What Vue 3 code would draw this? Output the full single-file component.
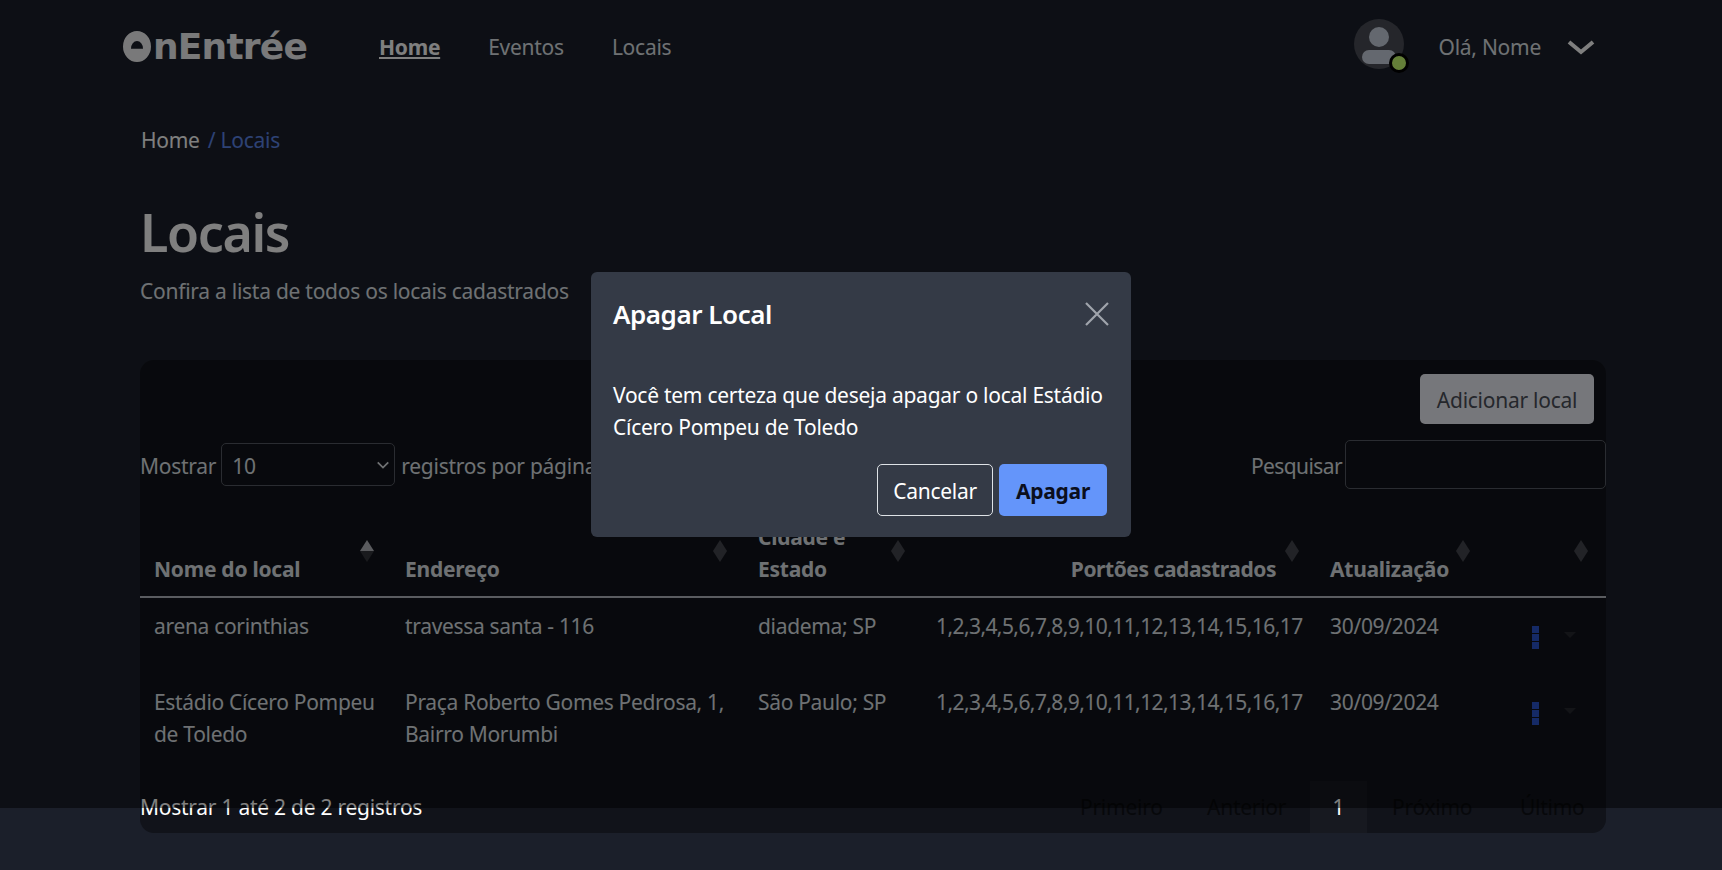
<template>
  <div class="page">
    <header class="navbar">
      <div class="logo" aria-label="OnEntrée">
        <svg class="logo-o" viewBox="0 0 30 30" width="30" height="33" preserveAspectRatio="none">
          <path fill-rule="evenodd" d="M15 1a14 14 0 1 0 0 28 14 14 0 0 0 0-28zM9 17a6 7 0 0 1 12 0z" fill="#fff" />
        </svg>
        <span>nEntrée</span>
      </div>
      <nav class="nav-links">
        <a class="active">Home</a>
        <a>Eventos</a>
        <a>Locais</a>
      </nav>
      <div class="user">
        <div class="avatar">
          <svg viewBox="0 0 50 50" width="50" height="50">
            <circle cx="25" cy="25" r="25" fill="#4a4d57" />
            <circle cx="25" cy="18" r="10" fill="#c9d1de" />
            <rect x="8" y="31" width="34" height="14" rx="7" fill="#c9d1de" />
          </svg>
          <span class="status"></span>
        </div>
        <span class="hello">Olá, Nome</span>
        <svg class="chevron" viewBox="0 0 28 16" width="28" height="16">
          <path d="M2 3l12 10L26 3" fill="none" stroke="#fff" stroke-width="4" />
        </svg>
      </div>
    </header>

    <main class="content">
      <div class="breadcrumb"><span>Home</span><a>/ Locais</a></div>
      <h1>Locais</h1>
      <p class="subtitle">Confira a lista de todos os locais cadastrados</p>

      <section class="card">
        <div class="card-top">
          <button class="btn-add">Adicionar local</button>
        </div>
        <div class="controls">
          <div class="per-page">
            <span>Mostrar</span>
            <div class="select">
              <span>10</span>
              <svg viewBox="0 0 16 16" width="14" height="14">
                <path d="M2 5l6 6 6-6" fill="none" stroke="#dee2e6" stroke-width="2" />
              </svg>
            </div>
            <span>registros por página</span>
          </div>
          <div class="search">
            <span>Pesquisar</span>
            <div class="search-input"></div>
          </div>
        </div>

        <table>
          <colgroup>
            <col v-for="w in colWidths" :key="w" :style="{ width: w + 'px' }" />
          </colgroup>
          <thead>
            <tr>
              <th v-for="(h, i) in headers" :key="i" :class="{ right: h.right }">
                {{ h.label }}
                <span class="sort" :class="{ asc: i === 0 }" :style="{ right: h.sort + 'px' }"></span>
              </th>
            </tr>
          </thead>
          <tbody>
            <tr v-for="row in rows" :key="row.name">
              <td>{{ row.name }}</td>
              <td>{{ row.address }}</td>
              <td>{{ row.city }}</td>
              <td class="gates">{{ row.gates }}</td>
              <td>{{ row.updated }}</td>
              <td>
                <div class="actions">
                  <span class="dots"><i></i><i></i><i></i></span>
                  <span class="caret"></span>
                </div>
              </td>
            </tr>
          </tbody>
        </table>

        <div class="card-footer">
          <span class="info">Mostrar 1 até 2 de 2 registros</span>
          <div class="pagination">
            <a class="p-first">Primeiro</a>
            <a class="p-prev">Anterior</a>
            <a class="p-current">1</a>
            <a class="p-next">Próximo</a>
            <a class="p-last">Último</a>
          </div>
        </div>
      </section>
    </main>

    <div class="backdrop"></div>

    <div class="modal">
      <div class="modal-head">
        <h2>Apagar Local</h2>
        <svg viewBox="0 0 24 24" width="24" height="24">
          <path d="M1 1l22 22M23 1L1 23" stroke="#a0a4ac" stroke-width="2.2" fill="none" />
        </svg>
      </div>
      <p>Você tem certeza que deseja apagar o local Estádio Cícero Pompeu de Toledo</p>
      <div class="modal-actions">
        <button class="btn-cancel">Cancelar</button>
        <button class="btn-delete">Apagar</button>
      </div>
    </div>
  </div>
</template>

<script setup>
const colWidths = [251, 353, 178, 394, 150, 140]

const headers = [
  { label: 'Nome do local', sort: 17 },
  { label: 'Endereço', sort: 17 },
  { label: 'Cidade e Estado', sort: 17 },
  { label: 'Portões cadastrados', right: true, sort: 17 },
  { label: 'Atualização', sort: -4 },
  { label: '', sort: 18 },
]

const gates = '1,2,3,4,5,6,7,8,9,10,11,12,13,14,15,16,17'

const rows = [
  { name: 'arena corinthias', address: 'travessa santa - 116', city: 'diadema; SP', gates, updated: '30/09/2024' },
  {
    name: 'Estádio Cícero Pompeu de Toledo',
    address: 'Praça Roberto Gomes Pedrosa, 1, Bairro Morumbi',
    city: 'São Paulo; SP',
    gates,
    updated: '30/09/2024',
  },
]
</script>

<style>
html,
body {
  margin: 0;
  background: #1b1f2a;
  overflow: hidden;
}
</style>

<style scoped>
* {
  box-sizing: border-box;
}
.page {
  position: relative;
  height: 870px;
  overflow: hidden;
  font-family: "Noto Sans", "Open Sans", sans-serif;
  font-size: 21px;
  line-height: 32px;
  letter-spacing: -0.26px;
  color: #dee2e6;
  background: #1b1f2a;
}

.navbar {
  display: flex;
  align-items: center;
  height: 93px;
  padding-left: 122px;
}
.logo {
  display: flex;
  align-items: center;
  gap: 1px;
  width: 257px;
  color: #fff;
  font-family: "DejaVu Sans", sans-serif;
  font-weight: 700;
  font-size: 36px;
  letter-spacing: -0.8px;
  opacity: 0.95;
}
.nav-links {
  display: flex;
  gap: 48px;
}
.nav-links .active {
  font-weight: 700;
  color: #fff;
  text-decoration: underline;
}
.user {
  display: flex;
  align-items: center;
  margin-left: auto;
  padding-right: 127px;
}
.avatar {
  position: relative;
  width: 50px;
  height: 50px;
  margin: -5px 35px 0 0;
}
.status {
  position: absolute;
  right: -5px;
  bottom: -4px;
  width: 20px;
  height: 20px;
  border-radius: 50%;
  background: #c8ff70;
  border: 3px solid #000;
}
.hello {
  margin-right: 26px;
}

.content {
  margin: 0 116px 0 140px;
}
.breadcrumb {
  display: flex;
  gap: 8px;
  margin-top: 31px;
  padding-left: 1px;
}
.breadcrumb span {
  color: #fff;
}
.breadcrumb a {
  color: #5c85e8;
}
h1 {
  margin: 41px 0 0;
  font-size: 52px;
  line-height: 70px;
  font-weight: 600;
  letter-spacing: -1.4px;
  color: #fff;
}
.subtitle {
  margin: 8px 0 0;
}

.card {
  display: flex;
  flex-direction: column;
  margin-top: 53px;
  height: 473px;
  border-radius: 14px;
  background: #11131a;
}
.card-top {
  display: flex;
  justify-content: flex-end;
  padding: 14px 12px 0;
}
.btn-add {
  width: 174px;
  height: 50px;
  padding-top: 3px;
  border: none;
  border-radius: 5px;
  background: #eceef6;
  color: #4a4e58;
  font: inherit;
  letter-spacing: inherit;
}
.controls {
  display: flex;
  justify-content: space-between;
  align-items: center;
  margin-top: 16px;
}
.per-page,
.search {
  display: flex;
  align-items: center;
}
.per-page span,
.search span {
  padding-top: 2px;
}
.search span {
  letter-spacing: -0.6px;
}
.select {
  display: flex;
  align-items: center;
  justify-content: space-between;
  width: 174px;
  height: 43px;
  margin: 0 6px 0 5px;
  padding: 0 4px 0 10px;
  border: 1.5px solid #555962;
  border-radius: 5px;
}
.search-input {
  width: 261px;
  height: 49px;
  margin-left: 3px;
  border: 1.5px solid #555962;
  border-radius: 5px;
}

table {
  width: 1466px;
  margin-top: 9px;
  border-collapse: collapse;
  table-layout: fixed;
}
th {
  position: relative;
  height: 99px;
  padding: 0 13px 11px 14px;
  vertical-align: bottom;
  text-align: left;
  font-weight: 700;
  border-bottom: 2px solid #b4b8c0;
}
th.right {
  padding-right: 40px;
  letter-spacing: -0.45px;
  text-align: right;
}
.sort {
  position: absolute;
  bottom: 34px;
  width: 14px;
  height: 22px;
  background: #45474f;
  clip-path: polygon(50% 0, 100% 50%, 50% 100%, 0 50%);
}
.sort.asc {
  background: linear-gradient(#b4b6bc 50%, #34363d 50%);
}
td {
  padding: 12px 13px 20px 14px;
  vertical-align: top;
  letter-spacing: -0.32px;
}
td.gates {
  letter-spacing: -0.58px;
}
tbody tr:first-child td {
  height: 77px;
}
.actions {
  position: relative;
  display: flex;
  align-items: center;
  gap: 25px;
  padding: 16px 0 0 52px;
}
.dots {
  display: flex;
  flex-direction: column;
  gap: 1px;
}
.dots i {
  display: block;
  width: 7px;
  height: 7px;
  background: #2a55cc;
}
.caret {
  width: 0;
  height: 0;
  margin-top: -6px;
  border-left: 6px solid transparent;
  border-right: 6px solid transparent;
  border-top: 6px solid #26282f;
}

.card-footer {
  position: relative;
  display: flex;
  justify-content: space-between;
  align-items: center;
  height: 52px;
  margin-top: auto;
}
.info {
  color: #fff;
}
.pagination {
  position: absolute;
  inset: 0;
}
.pagination a {
  position: absolute;
  top: 10px;
  color: #07080b;
}
.p-first {
  left: 940px;
}
.p-prev {
  left: 1067px;
}
.pagination .p-current {
  left: 1170px;
  top: 0;
  width: 57px;
  height: 52px;
  line-height: 52px;
  text-align: center;
  color: #fff;
  background: #171920;
}
.p-next {
  left: 1252px;
}
.p-last {
  left: 1380px;
}

.backdrop {
  position: absolute;
  left: 0;
  top: 0;
  width: 100%;
  height: 808px;
  background: rgba(0, 0, 0, 0.5);
}
.modal {
  position: absolute;
  left: 591px;
  top: 272px;
  width: 540px;
  height: 265px;
  padding: 0 22px;
  border-radius: 6px;
  background: #343a46;
  color: #fff;
}
.modal-head {
  display: flex;
  justify-content: space-between;
  align-items: center;
  height: 84px;
}
h2 {
  margin: 0;
  font-size: 26px;
  font-weight: 600;
  letter-spacing: -0.45px;
}
.modal p {
  margin: 23px 0 0;
}
.modal-actions {
  display: flex;
  justify-content: flex-end;
  gap: 6px;
  margin: 21px 2px 0 0;
}
.modal-actions button {
  height: 52px;
  padding-top: 2px;
  border-radius: 5px;
  font: inherit;
  letter-spacing: inherit;
}
.btn-cancel {
  width: 116px;
  border: 1.5px solid #dee2e6;
  background: transparent;
  color: #fff;
}
.btn-delete {
  width: 108px;
  border: none;
  background: #6495fa;
  color: #0b0f1e;
  font-weight: 700 !important;
}
</style>
